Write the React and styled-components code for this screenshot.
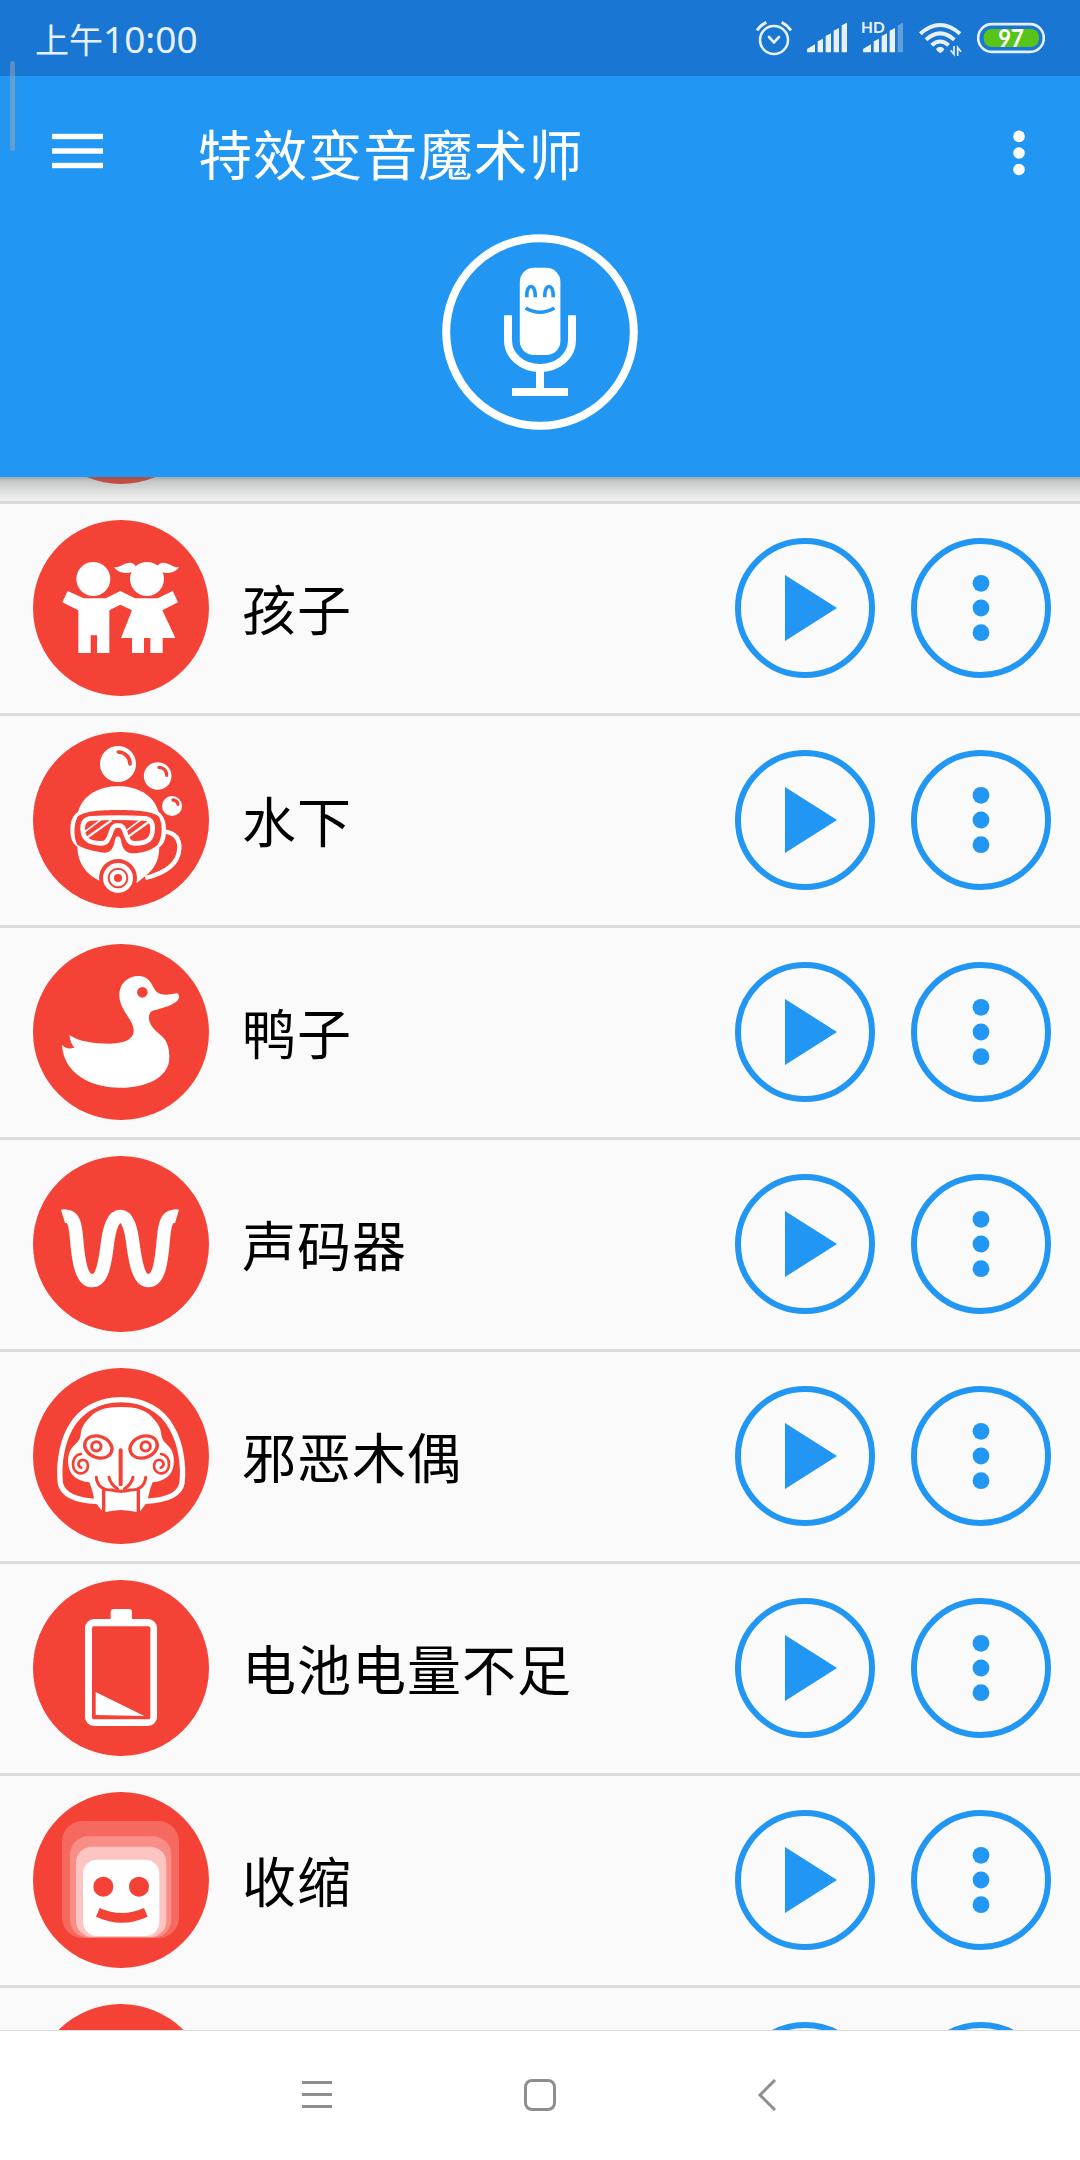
import React from 'react';
import styled, { createGlobalStyle } from 'styled-components';

const RED = '#f44336';
const BLUE = '#2196f3';

const KidsIcon = () => (
  <svg viewBox='99 180 528 528' fill='#fff'>
    <circle cx='280' cy='357' r='51' />
    <circle cx='441' cy='357' r='51' />
    <path d='M342 322 C362 322 372 308 390 308 C398 308 404 312 407 318 L398 335 C378 342 356 341 342 322Z' />
    <path d='M537 322 C517 322 507 308 489 308 C481 308 475 312 472 318 L484 335 C501 342 523 341 537 322Z' />
    <path d='M203 393 L251 415 H317 L361 393 L405 415 H473 L518 393 L534 427 L487 451 L526 534 H488 V579 H451 V534 H432 V579 H396 V534 H363 L396 451 L361 434 L328 451 V579 H291 V526 H272 V579 H235 V451 L187 427Z' />
  </svg>
);

const DiverIcon = () => (
  <svg viewBox='39 36 528 528' fill='#fff'>
    <circle cx='294' cy='132' r='54' />
    <circle cx='413' cy='168' r='41.5' />
    <circle cx='456' cy='258' r='30' />
    <g fill='none' stroke={RED} strokeLinecap='round'>
      <path d='M295 96 C316 97 330 112 330 132' strokeWidth='11' />
      <path d='M417 142 C431 143 440 152 440 166' strokeWidth='10' />
      <path d='M459 240 C467 241 473 246 474 253' strokeWidth='10' />
    </g>
    <path d='M174 276 C190 222 240 199 294 199 C350 199 400 222 416 276 C432 288 438 306 438 330 C438 356 432 372 418 382 C417 428 398 452 376 468 L350 489 L238 482 C198 462 173 430 172 380 C158 372 151 354 151 330 C151 304 158 286 174 276Z' />
    <path
      fill={RED}
      d='M172 292 C184 274 240 270 294 270 S406 274 418 292 C429 318 427 354 413 374 C396 391 364 400 335 400 C312 398 305 376 303 360 C300 345 288 345 285 360 C281 378 276 398 255 398 C222 394 190 386 172 374 C161 354 160 316 172 292Z'
    />
    <path
      fill={RED}
      stroke='#fff'
      strokeWidth='14'
      d='M215 295 Q294 291 372 295 Q398 296 398 325 C397 356 386 370 345 370 C328 370 324 360 317 342 C310 320 305 316 294 316 S278 320 271 342 C264 360 260 370 243 370 C201 370 188 354 188 325 Q188 296 215 295Z'
    />
    <g stroke='#fff' strokeWidth='5'>
      <path d='M243 299 L195 335' />
      <path d='M274 301 L201 353' strokeWidth='7' />
      <path d='M363 299 L320 331' />
      <path d='M390 303 L326 349' strokeWidth='7' />
    </g>
    <path fill='none' stroke='#fff' strokeWidth='13' d='M437 335 C466 340 479 358 478 385 C476 440 424 462 376 474' />
    <circle cx='294' cy='474' r='57' fill={RED} />
    <circle cx='294' cy='474' r='45' />
    <circle cx='294' cy='474' r='28' fill='none' stroke={RED} strokeWidth='6' />
    <circle cx='294' cy='474' r='12' fill={RED} />
  </svg>
);

const DuckIcon = () => (
  <svg viewBox='39 42 528 528' fill='#fff'>
    <path d='M356 138 C382 138 392 155 402 175 C412 194 430 198 470 190 C478 190 479 203 473 211 C460 225 430 235 405 240 C390 243 386 252 387 268 C390 290 410 305 425 318 C445 335 450 365 447 395 C438 445 375 474 300 473 C205 473 130 425 126 345 C135 355 148 358 163 353 C154 343 150 330 148 315 C175 333 215 341 270 341 C320 340 342 325 341 300 C338 265 298 240 298 195 C298 160 325 138 356 138Z' />
    <circle cx='367' cy='187' r='16' fill={RED} />
  </svg>
);

const VocoderIcon = () => (
  <svg viewBox='39 48 528 528' fill='none' stroke='#fff' strokeWidth='40'>
    <path d='M141 229 C160 231 166 250 170 300 C176 370 186 422 217 422 C245 422 254 375 261 320 C268 260 280 229 301 229 C322 229 333 260 340 320 C348 375 358 422 385 422 C416 422 424 370 430 300 C434 250 441 231 460 229' />
    <path d='M123 209 C130 207 137 207 143 209 L146 249 L135 249Z M477 209 C470 207 464 207 457 209 L454 249 L465 249Z' fill='#fff' stroke='none' />
  </svg>
);

const PuppetHalf = () => (
  <g fill='none' stroke={RED} strokeLinecap='round'>
    <ellipse cx='235' cy='276' rx='42' ry='32' strokeWidth='10' transform='rotate(20 235 276)' />
    <circle cx='229' cy='274' r='14' strokeWidth='9' />
    <path strokeWidth='8' d='M183 297 C166 299 158 314 159 330 C161 352 178 360 193 352 C209 342 206 316 190 315 C174 314 170 333 184 338' />
    <path strokeWidth='9' d='M229 367 C232 394 248 405 275 405 Q289 409 303 409' />
    <path strokeWidth='9' d='M267 367 C271 384 281 394 293 402' />
    <path strokeWidth='10' strokeLinecap='butt' d='M251 402 L251 474' />
  </g>
);

const PuppetIcon = () => (
  <svg viewBox='39 39 528 528' fill='#fff'>
    <path fill='none' stroke='#fff' strokeWidth='16' d='M230 439 C180 437 130 425 121 385 C115 330 125 265 150 220 C180 165 235 134 303 134 C370 134 428 165 456 220 C482 265 492 330 486 385 C478 425 425 437 376 439' />
    <path d='M303 156 C350 156 375 165 395 185 C415 205 423 220 424 240 C426 252 430 258 440 268 C460 285 465 310 460 335 C455 360 435 378 398 382 C390 400 386 420 382 440 L361 468 L350 471 Q328 467 303 465 Q278 467 257 471 L245 466 L224 440 C220 420 216 400 208 382 C171 378 151 360 146 335 C141 310 146 285 166 268 C176 258 180 252 182 240 C183 220 191 205 211 185 C231 165 256 156 303 156Z' />
    <PuppetHalf />
    <g transform='translate(606 0) scale(-1 1)'>
      <PuppetHalf />
    </g>
    <path stroke={RED} strokeWidth='12' strokeLinecap='round' d='M302 286 V388' />
  </svg>
);

const BatteryIcon = () => (
  <svg viewBox='39 30 528 528' fill='#fff'>
    <rect x='272' y='117' width='64' height='50' rx='10' />
    <rect x='195' y='147' width='216' height='321' rx='27' />
    <rect x='216' y='169' width='175' height='279' rx='6' fill={RED} />
    <path d='M227 366 L373 438 L227 435Z' />
  </svg>
);

const ShrinkIcon = () => (
  <svg viewBox='39 36 528 528'>
    <rect x='126' y='123' width='351' height='351' rx='62' fill='#f6695e' />
    <rect x='150' y='169' width='304' height='304' rx='54' fill='#f88e86' />
    <rect x='168' y='200' width='271' height='271' rx='48' fill='#fcc5c1' />
    <rect x='189' y='239' width='229' height='229' rx='42' fill='#fff' />
    <g fill={RED}>
      <circle cx='250' cy='320' r='30' />
      <circle cx='357' cy='320' r='30' />
      <path d='M239 384 Q305 414 372 384 L383 410 Q305 446 228 410Z' />
    </g>
  </svg>
);

const effects = [
  { id: 'prev' },
  { id: 'kids', name: '孩子', icon: <KidsIcon /> },
  { id: 'diver', name: '水下', icon: <DiverIcon /> },
  { id: 'duck', name: '鸭子', icon: <DuckIcon /> },
  { id: 'vocoder', name: '声码器', icon: <VocoderIcon /> },
  { id: 'puppet', name: '邪恶木偶', icon: <PuppetIcon /> },
  { id: 'battery', name: '电池电量不足', icon: <BatteryIcon /> },
  { id: 'shrink', name: '收缩', icon: <ShrinkIcon /> },
  { id: 'next' },
];

const StatusIcons = () => (
  <IconTray>
    <svg width='36' height='76' viewBox='48 0 108 228' fill='none' stroke='#e8f1fa' strokeLinecap='round'>
      <circle cx='102' cy='120' r='42' strokeWidth='7.5' />
      <path strokeWidth='8' d='M87 111 L102 127 L117 111' />
      <path strokeWidth='9' strokeLinecap='butt' d='M51 91 Q62 75 79 67 M153 91 Q142 75 125 67' />
    </svg>
    <svg width='40' height='76' viewBox='201 0 120 228' fill='#e8f1fa'>
      <path d='M201 157 V147 L225 133 V157Z M233 157 V124 L249 116 V157Z M257 157 V108 L273 100 V157Z M281 157 V92 L297 84 V157Z M305 157 V76 L321 68 V157Z' />
    </svg>
    <svg width='42' height='76' viewBox='366 0 126 228' fill='#e8f1fa'>
      <path d='M369 157 V147 L393 133 V157Z M401 157 V124 L417 116 V157Z M425 157 V108 L441 100 V157Z M449 157 V92 L465 84 V157Z' />
      <path d='M473 157 V76 L489 68 V157Z' fill='#619fdd' />
      <text x='363' y='99' fontSize='46' fontWeight='700' textLength='71' lengthAdjust='spacingAndGlyphs'>HD</text>
    </svg>
    <svg width='43' height='76' viewBox='537 0 129 228' fill='none' stroke='#e8f1fa'>
      <path strokeWidth='12' d='M541 101 Q600 49 660 101' />
      <path strokeWidth='12' d='M558 119 Q600 81 643 119' />
      <path strokeWidth='12' d='M575 136 Q600 113 626 136' />
      <path stroke='none' fill='#e8f1fa' d='M588 147 Q600 133 613 147 Q611 155 601 160 Q591 155 588 147Z' />
      <path strokeWidth='5' d='M632 151 L642 163 V138 M663 155 L653 142 V168' />
    </svg>
    <svg width='68' height='76' viewBox='711 0 204 228'>
      <rect x='714.5' y='72.5' width='197' height='83' rx='41' fill='none' stroke='#e8f1fa' strokeWidth='8' />
      <rect x='731' y='87' width='166' height='54' rx='24' fill='#58c41a' />
      <text x='813' y='140' fontSize='72' fontWeight='700' fill='#fff' textAnchor='middle' textLength='77' lengthAdjust='spacingAndGlyphs'>97</text>
    </svg>
  </IconTray>
);

const App = () => {
  return (
    <Screen>
      <GlobalStyle />
      <StatusBar>
        <Clock>上午<span>10:00</span></Clock>
        <StatusIcons />
        <EdgeHandle />
      </StatusBar>

      <Header>
        <Toolbar>
          <svg width='51' height='40' viewBox='0 0 51 40' fill='#fff'>
            <rect x='0' y='1.8' width='51' height='5.4' />
            <rect x='0' y='16.3' width='51' height='5.4' />
            <rect x='0' y='30.8' width='51' height='5.4' />
          </svg>
          <Title>特效变音魔术师</Title>
          <svg width='12' height='50' viewBox='0 0 12 50' fill='#fff'>
            <circle cx='6' cy='9.4' r='5.8' />
            <circle cx='6' cy='26' r='5.8' />
            <circle cx='6' cy='42.5' r='5.8' />
          </svg>
        </Toolbar>
        <MicButton>
          <svg width='196' height='196' viewBox='0 0 196 196' fill='none'>
            <circle cx='98' cy='98' r='93.8' stroke='#fff' strokeWidth='8' />
            <rect x='77.8' y='33.8' width='40.6' height='87.2' rx='14' fill='#fff' />
            <path stroke='#fff' strokeWidth='8' d='M66 81.3 V106 C66 122 80 134 98 134 S130 122 130 106 V81.3 M98 134 V156 M70 158 H126' />
            <g stroke={BLUE} strokeWidth='3.6'>
              <path d='M84.8 63.2 V61 C84.8 49.6 93.2 49.6 93.2 61 V63.2' />
              <path d='M102.8 63.2 V61 C102.8 49.6 111.2 49.6 111.2 61 V63.2' />
              <path d='M83.6 74 Q98 82.4 112.4 74' />
            </g>
          </svg>
        </MicButton>
      </Header>

      <EffectList>
        {effects.map(({ id, name, icon }) => (
          <EffectRow key={id}>
            <Avatar>{icon}</Avatar>
            <EffectName>{name}</EffectName>
            <RoundButton>
              <svg width='128' height='128' viewBox='0 0 128 128' fill={BLUE}>
                <path d='M44 31 L96 64 L44 97Z' />
              </svg>
            </RoundButton>
            <RoundButton>
              <svg width='128' height='128' viewBox='0 0 128 128' fill={BLUE}>
                <circle cx='64' cy='39.3' r='8.4' />
                <circle cx='64' cy='64' r='8.4' />
                <circle cx='64' cy='88.7' r='8.4' />
              </svg>
            </RoundButton>
          </EffectRow>
        ))}
      </EffectList>

      <NavBar>
        <svg width='32' height='32' viewBox='0 0 32 32'>
          <path d='M1 3.5 H31 M1 15.5 H31 M1 27.5 H31' />
        </svg>
        <svg width='32' height='32' viewBox='0 0 32 32'>
          <rect x='1.5' y='1.5' width='29' height='29' rx='6.5' />
        </svg>
        <svg width='32' height='32' viewBox='0 0 32 32'>
          <path d='M28 1 L13 16 L28 31' />
        </svg>
      </NavBar>
    </Screen>
  );
};

const GlobalStyle = createGlobalStyle`
  * {
    box-sizing: border-box;
  }

  body {
    margin: 0;
    font-family: 'Noto Sans CJK SC', sans-serif;
  }

  svg {
    display: block;
    flex: none;
  }
`;

const Screen = styled.div`
  display: flex;
  flex-direction: column;
  width: 1080px;
  height: 2160px;
  overflow: hidden;
  background-color: #fafafa;
`;

const StatusBar = styled.div`
  position: relative;
  z-index: 2;
  display: flex;
  flex: none;
  align-items: center;
  justify-content: space-between;
  height: 76px;
  padding: 0 35px;
  background-color: #1976d2;
`;

const Clock = styled.div`
  color: #e8f1fa;
  font-family: 'Noto Sans', 'Noto Sans CJK SC', sans-serif;
  font-size: 34px;
  line-height: 1;

  span {
    font-size: 37px;
  }
`;

const IconTray = styled.div`
  display: flex;
  gap: 15px;

  text {
    font-family: Lato, sans-serif;
  }
`;

const EdgeHandle = styled.span`
  position: absolute;
  top: 61px;
  left: 10px;
  width: 5px;
  height: 90px;
  border-radius: 3px;
  background-color: rgba(158, 167, 176, 0.5);
`;

const Header = styled.header`
  position: relative;
  z-index: 1;
  flex: none;
  height: 401px;
  background-color: ${BLUE};

  /* drop shadow over the list */
  &::after {
    content: '';
    position: absolute;
    top: 100%;
    left: 0;
    right: 0;
    height: 26px;
    background: linear-gradient(rgba(90, 100, 100, 0.54), rgba(90, 100, 100, 0.34) 15%, rgba(100, 106, 106, 0.17) 60%, rgba(100, 110, 120, 0.04));
  }
`;

const Toolbar = styled.div`
  display: flex;
  align-items: center;
  height: 152px;
  padding: 0 55px 0 51.5px;
`;

const Title = styled.h1`
  flex: 1;
  margin: 0;
  padding: 1px 0 0 95.5px;
  color: #fff;
  font-size: 54px;
  font-weight: 400;
  letter-spacing: 1.1px;
  line-height: 1;
`;

const MicButton = styled.div`
  display: flex;
  justify-content: center;
  padding-top: 6px;
`;

const EffectList = styled.main`
  flex: 1 1 0;
  min-height: 0;
  margin-top: -188px;
  overflow: hidden;
`;

const EffectRow = styled.div`
  display: flex;
  align-items: center;
  height: 212px;
  padding: 16px 29px 17px 33px;
  border-top: 3px solid #dcdcdc;
`;

const Avatar = styled.div`
  flex: none;
  width: 176px;
  height: 176px;
  border-radius: 50%;
  background-color: ${RED};
`;

const EffectName = styled.span`
  flex: 1;
  padding: 0 0 1px 33px;
  color: #000;
  font-size: 54px;
  letter-spacing: 1px;
  line-height: 1;
`;

const RoundButton = styled.div`
  flex: none;
  width: 140px;
  height: 140px;
  margin-left: 36px;
  border: 6px solid ${BLUE};
  border-radius: 50%;
`;

const NavBar = styled.nav`
  display: flex;
  flex: none;
  align-items: center;
  gap: 191px;
  height: 130px;
  padding: 0 0 2px 301px;
  border-top: 1px solid #dedede;
  background-color: #fff;

  svg {
    fill: none;
    stroke: #8e8e8e;
    stroke-width: 3;
  }
`;

export default App;
